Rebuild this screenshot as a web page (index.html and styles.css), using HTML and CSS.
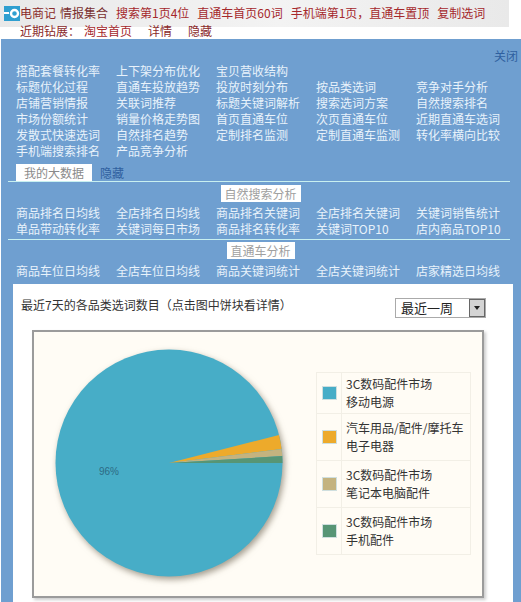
FILE: index.html
```html
<!DOCTYPE html>
<html lang="zh-CN">
<head>
    <meta charset="UTF-8">
    <title>电商记 情报集合</title>
    <link rel="stylesheet" href="styles.css">
</head>
<body>
    <div class="top">
        <div class="top-row">
            <svg class="logo" width="16" height="15" viewBox="0 0 16 15">
                <rect width="16" height="15" fill="#2f9fd0"/>
                <rect x="0" y="6" width="5" height="2" fill="#fff"/>
                <circle cx="10.5" cy="7.5" r="3.5" fill="none" stroke="#fff" stroke-width="2.4"/>
            </svg>
            <span class="brand">电商记</span>
            <span class="brand-b">情报集合</span>
            <a class="gap">搜索第1页4位</a>
            <a class="gap">直通车首页60词</a>
            <a class="gap">手机端第1页，直通车置顶</a>
            <a class="gap">复制选词</a>
        </div>
        <div class="top-row second">
            <span class="brand">近期钻展：</span>
            <a class="r1">淘宝首页</a>
            <a class="r2">详情</a>
            <a class="r2">隐藏</a>
        </div>
    </div>

    <div class="panel">
        <div class="close"><a>关闭</a></div>
        <ul class="links">
            <li>搭配套餐转化率</li><li>上下架分布优化</li><li>宝贝营收结构</li><li></li><li></li>
            <li>标题优化过程</li><li>直通车投放趋势</li><li>投放时刻分布</li><li>按品类选词</li><li>竞争对手分析</li>
            <li>店铺营销情报</li><li>关联词推荐</li><li>标题关键词解析</li><li>搜索选词方案</li><li>自然搜索排名</li>
            <li>市场份额统计</li><li>销量价格走势图</li><li>首页直通车位</li><li>次页直通车位</li><li>近期直通车选词</li>
            <li>发散式快速选词</li><li>自然排名趋势</li><li>定制排名监测</li><li>定制直通车监测</li><li>转化率横向比较</li>
            <li>手机端搜索排名</li><li>产品竞争分析</li>
        </ul>
        <div class="tabs">
            <span class="tab-on">我的大数据</span>
            <a class="tab-hide">隐藏</a>
        </div>
        <div class="sec-title"><span class="t1">自然搜索分析</span></div>
        <ul class="links tight">
            <li>商品排名日均线</li><li>全店排名日均线</li><li>商品排名关键词</li><li>全店排名关键词</li><li>关键词销售统计</li>
            <li>单品带动转化率</li><li>关键词每日市场</li><li>商品排名转化率</li><li>关键词TOP10</li><li>店内商品TOP10</li>
        </ul>
        <div class="sec-title second-sec"><span class="t2">直通车分析</span></div>
        <ul class="links last">
            <li>商品车位日均线</li><li>全店车位日均线</li><li>商品关键词统计</li><li>全店关键词统计</li><li>店家精选日均线</li>
        </ul>

        <div class="card">
            <div class="card-head">
                <span class="card-title">最近7天的各品类选词数目（点击图中饼块看详情）</span>
                <div class="fake-select">
                    <span class="sel-text">最近一周</span>
                    <span class="sel-btn"><i></i></span>
                </div>
            </div>
            <div class="chart">
                <div class="pie">
                    <svg width="250" height="250" viewBox="0 0 250 250">
                        <g class="pie-g">
                            <circle cx="120" cy="120" r="113.5" fill="#47adc7"/>
                            <path d="M120 120 L230 92 A113.5 113.5 0 0 1 232.6 106 Z" fill="#edaa2b"/>
                            <path d="M120 120 L232.6 106 A113.5 113.5 0 0 1 233.3 113 Z" fill="#c4b37f"/>
                            <path d="M120 120 L233.3 113 A113.5 113.5 0 0 1 233.5 120 Z" fill="#579575"/>
                        </g>
                        <text x="50" y="132" class="pct">96%</text>
                    </svg>
                </div>
                <table class="legend">
                    <tr class="row-first"><td class="sw"><i class="c1"></i></td><td>3C数码配件市场<br>移动电源</td></tr>
                    <tr><td class="sw"><i class="c2"></i></td><td>汽车用品/配件/摩托车<br>电子电器</td></tr>
                    <tr><td class="sw"><i class="c3"></i></td><td>3C数码配件市场<br>笔记本电脑配件</td></tr>
                    <tr><td class="sw"><i class="c4"></i></td><td>3C数码配件市场<br>手机配件</td></tr>
                </table>
            </div>
        </div>
    </div>
</body>
</html>
```

FILE: styles.css
```css
/* reset css */
html,body,ul,li {
    margin: 0;
    padding: 0;
    list-style: none;
}
body {
    height: 602px;
    overflow: hidden;
    background: #fff;
    font: 12px/16px "Noto Sans CJK SC", "Liberation Sans", sans-serif;
}
/* top bar */
.top {
    height: 39px;
    background: linear-gradient(to right, #e9e9e9, #f3f3f3 55%, #e9e9e9) no-repeat 0 0 / 509px 27px;
}
.top-row {
    display: flex;
    align-items: center;
    height: 18px;
    color: #a5282c;
}
.top-row:first-child {
    padding: 4px 0 0 4px;
}
.top-row.second {
    padding-left: 20px;
}
.logo {
    flex: none;
}
.brand {
    color: #8a2a2a;
}
.brand-b {
    margin-left: 4px;
    color: #7a3030;
}
.gap {
    margin-left: 8px;
}
.r1 {
    margin-left: 4px;
}
.r2 {
    margin-left: 16px;
    color: #8a2a2a;
}
/* blue panel */
.panel {
    height: 563px;
    margin-left: 1px;
    padding-top: 9px;
    box-sizing: border-box;
    background: #6f9fd0;
    color: #e8f2fb;
}
.close {
    height: 15px;
    padding-right: 3px;
    text-align: right;
    color: #2f5f9f;
}
.links {
    display: grid;
    grid-template-columns: repeat(5, 100px);
    grid-auto-rows: 16px;
    margin: 0 0 0 15px;
}
.links li {
    white-space: nowrap;
}
.tabs {
    display: flex;
    height: 17px;
    margin: 5px 11px 0 7px;
    padding-left: 8px;
    border-bottom: 1px solid #c8f0f0;
}
.tab-on {
    width: 76px;
    background: #fff;
    color: #8a8a8a;
    text-align: center;
    line-height: 17px;
}
.tab-hide {
    margin-left: 8px;
    color: #2f5f9f;
    line-height: 17px;
}
.sec-title {
    height: 17px;
    margin: 3px 1px 0 0;
    text-align: center;
}
.second-sec {
    margin-top: 2px;
}
.sec-title span {
    display: inline-block;
    height: 17px;
    background: #fff;
    color: #a0a0a0;
    line-height: 17px;
}
.t1 {
    width: 80px;
}
.t2 {
    width: 68px;
}
.tight {
    height: 34px;
    margin: 0 11px 0 7px;
    padding: 3px 0 0 8px;
    border-bottom: 1px solid #c8f0f0;
}
.last {
    padding-top: 4px;
}
/* white card */
.card {
    height: 318px;
    margin: 5px 8px 0 12px;
    background: #fff;
}
.card-head {
    display: flex;
    justify-content: space-between;
    align-items: flex-start;
    height: 21px;
    padding: 13px 27px 0 8px;
    color: #333;
}
.fake-select {
    display: flex;
    box-sizing: border-box;
    width: 91px;
    height: 20px;
    margin-top: 1px;
    border: 1px solid #aaa;
    color: #222;
    font-size: 13px;
    line-height: 18px;
}
.sel-text {
    flex: 1;
    padding-left: 5px;
}
.sel-btn {
    display: flex;
    align-items: center;
    justify-content: center;
    box-sizing: border-box;
    width: 16px;
    background: #d4d4d4;
    border: 1px solid #666;
}
.sel-btn i {
    border: 3px solid transparent;
    border-top: 4px solid #222;
    border-bottom: none;
}
.chart {
    display: flex;
    box-sizing: border-box;
    width: 452px;
    height: 268px;
    margin: 12px 0 0 19px;
    border: 2px solid #9b9b9b;
    background: #fffcf5;
    box-shadow: 2px 2px 3px #ccc;
}
.pie {
    flex: none;
    box-sizing: border-box;
    width: 282px;
    padding: 11px 0 0 15px;
}
.pie-g {
    filter: drop-shadow(2px 3px 3px rgba(90, 80, 60, .55));
}
.pct {
    fill: #2d6b84;
    font-size: 10px;
    font-family: "Liberation Sans", sans-serif;
}
.legend {
    align-self: flex-start;
    width: 155px;
    margin-top: 40px;
    border-collapse: collapse;
    color: #333;
    line-height: 18px;
}
.legend tr {
    height: 47px;
}
.legend .row-first {
    height: 41px;
}
.legend td {
    padding: 0 0 0 4px;
    border: 1px solid #f2efe6;
    white-space: nowrap;
}
.legend .sw {
    width: 19px;
    padding: 0 0 0 5px;
}
.legend i {
    display: block;
    width: 13px;
    height: 12px;
    border: 1px solid #cfdfdf;
}
.c1 { background: #47adc7; }
.c2 { background: #edaa2b; }
.c3 { background: #c4b37f; }
.c4 { background: #579575; }
```
